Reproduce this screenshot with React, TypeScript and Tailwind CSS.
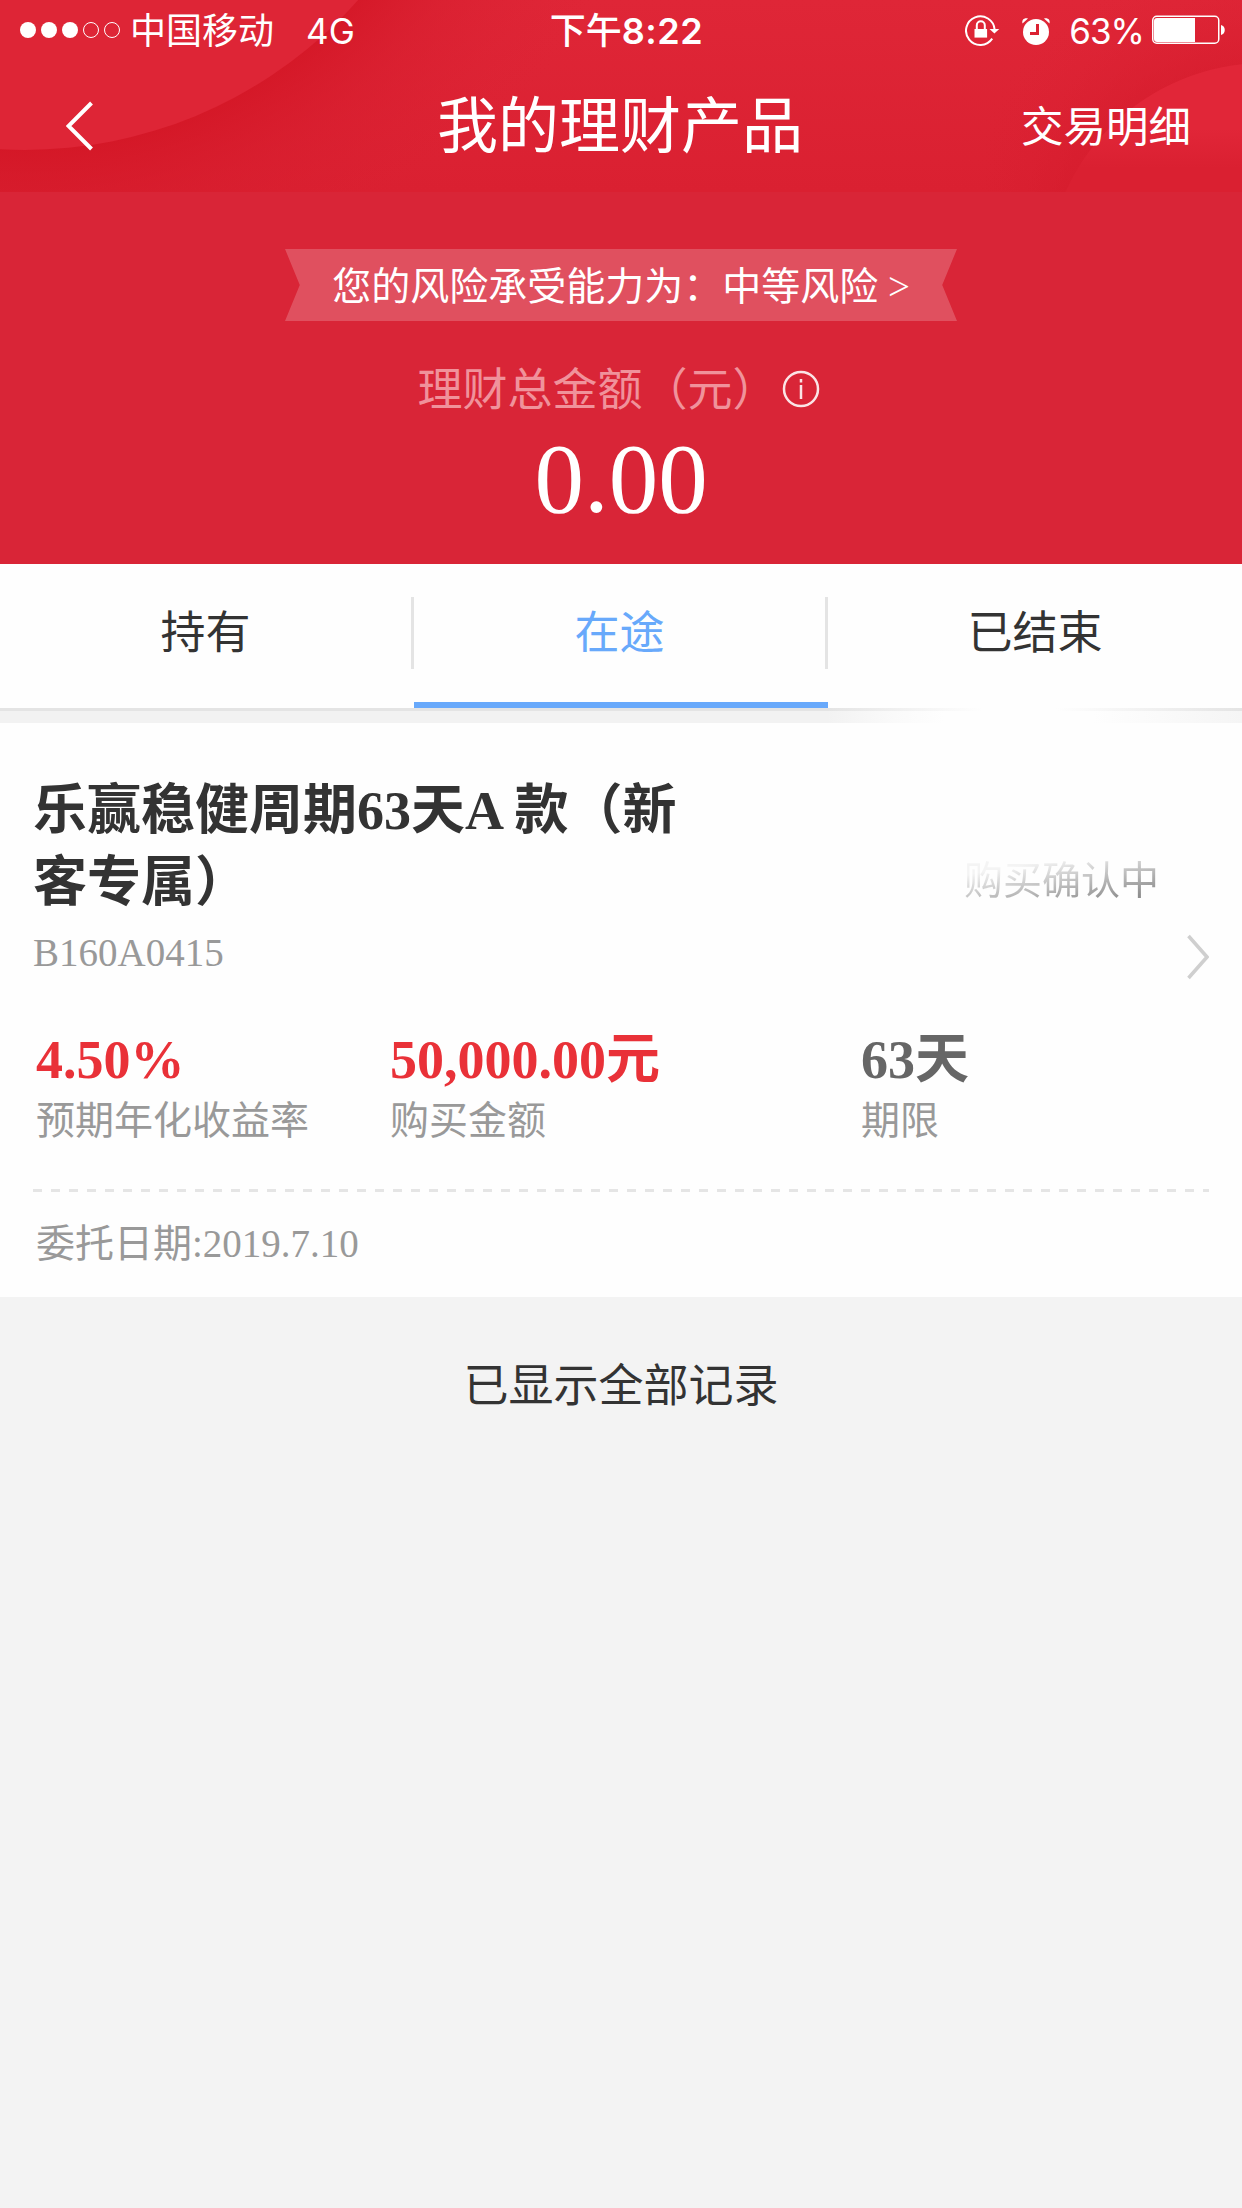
import React, { useState } from 'react';

const SANS = "font-['Inter','Noto_Sans_CJK_SC',sans-serif]";

interface Holding {
  name: string;
  code: string;
  status: string;
  rate: string;
  amount: string;
  term: string;
  date: string;
}

const tabs = ['持有', '在途', '已结束'];

const holdings: Holding[] = [
  {
    name: '乐赢稳健周期63天A 款（新客专属）',
    code: 'B160A0415',
    status: '购买确认中',
    rate: '4.50%',
    amount: '50,000.00元',
    term: '63天',
    date: '2019.7.10',
  },
];

const HeaderArt: React.FC = () => (
  <svg className="absolute inset-0 w-full h-full" viewBox="0 0 1242 192" preserveAspectRatio="none">
    <defs>
      <radialGradient id="shadeLeft" gradientUnits="userSpaceOnUse" cx="25" cy="-295" r="640">
        <stop offset="0.69" stopColor="#d21423" stopOpacity="0.75" />
        <stop offset="0.8" stopColor="#d51a2a" stopOpacity="0.42" />
        <stop offset="1" stopColor="#dc2233" stopOpacity="0" />
      </radialGradient>
      <radialGradient id="shadeRight" gradientUnits="userSpaceOnUse" cx="1265" cy="282" r="330">
        <stop offset="0.66" stopColor="#d41a2b" stopOpacity="0.5" />
        <stop offset="1" stopColor="#dc2233" stopOpacity="0" />
      </radialGradient>
      <linearGradient id="discRight" x1="0" y1="0" x2="0" y2="1">
        <stop offset="0" stopColor="#e12638" />
        <stop offset="0.15" stopColor="#e12638" />
        <stop offset="0.24" stopColor="#da2031" />
      </linearGradient>
      <linearGradient id="base" x1="0" y1="0" x2="0" y2="1">
        <stop offset="0" stopColor="#df2637" />
        <stop offset="1" stopColor="#da2031" />
      </linearGradient>
    </defs>
    <rect width="1242" height="192" fill="url(#base)" />
    <rect width="1242" height="192" fill="url(#shadeLeft)" />
    <rect width="1242" height="192" fill="url(#shadeRight)" />
    <circle cx="25" cy="-295" r="445" fill="#de2536" />
    <circle cx="1265" cy="282" r="219" fill="url(#discRight)" />
  </svg>
);

const StatusBar: React.FC = () => (
  <div className={`relative h-[60px] pl-5 pr-4 grid grid-cols-[1fr_auto_1fr] items-center text-white text-[36px] leading-[57px] ${SANS}`}>
    <div className="flex items-center">
      <div className="flex gap-[5px]">
        {[1, 1, 1, 0, 0].map((on, i) => (
          <span
            key={i}
            className={`w-4 h-4 rounded-full ${on ? 'bg-white' : 'border border-white'}`}
          />
        ))}
      </div>
      <span className="ml-[10px] pt-[3px]">中国移动</span>
      <span className="ml-[32px] pt-[3px] text-[35px]">4G</span>
    </div>
    <div className="pt-[3px] pl-[7px] font-medium">
      下午<span className="font-semibold tracking-[0.5px]">8:22</span>
    </div>
    <div className="flex items-center justify-end">
      <svg className="w-[36px] h-[32px]" viewBox="0 0 36 32" fill="none">
        <path d="M27.2 24.6A14.3 14.3 0 1 1 29.6 15.5" stroke="#fff" strokeWidth="2" />
        <path d="M24.5 15h9.8l-4.9 4.6z" fill="#fff" />
        <path d="M9.5 15h12.6v8.6H9.5z" fill="#fff" />
        <path d="M11.8 15v-3.7a4 4 0 0 1 8 0V15" stroke="#fff" strokeWidth="2" />
      </svg>
      <svg className="ml-[20px] w-[30px] h-[32px]" viewBox="0 0 30 32" fill="none">
        <circle cx="15" cy="18" r="13" fill="#fff" />
        <path d="M16.5 10v9.5H9" stroke="#db2132" strokeWidth="3" />
        <path d="M1.5 9.5C0.5 6 3 3.5 7 4.5zM28.5 9.5C29.5 6 27 3.5 23 4.5z" fill="#fff" />
      </svg>
      <span className="ml-[18px] pt-[3px] text-[35px] tracking-[-1px]">63%</span>
      <svg className="ml-[8px] w-[74px] h-[30px]" viewBox="0 0 74 30" fill="none">
        <rect x="0.75" y="1.25" width="66" height="27" rx="4" stroke="#fff" strokeWidth="1.5" />
        <path d="M5 3h38v24H5a3 3 0 0 1-3-3V6a3 3 0 0 1 3-3z" fill="#fff" />
        <path d="M69 10c5 1 5 9 0 10z" fill="#fff" />
      </svg>
    </div>
  </div>
);

const NavBar: React.FC = () => (
  <div className={`relative h-[132px] px-[51px] grid grid-cols-[1fr_auto_1fr] items-center text-white ${SANS}`}>
    <button className="ml-[15px] w-7 h-[50px]">
      <svg viewBox="0 0 28 50" className="w-7 h-[50px]" fill="none">
        <path d="M25.5 2L2.5 25L25.5 48" stroke="#fff" strokeWidth="4" />
      </svg>
    </button>
    <h1 className="pr-[2px] text-[61px] leading-[132px]">我的理财产品</h1>
    <button className="justify-self-end pt-[2px] text-[42.5px] leading-[130px]">交易明细</button>
  </div>
);

const Summary: React.FC = () => (
  <section className="h-[372px] pt-[57px] flex flex-col items-center text-white">
    <button className="w-[672px] h-[72px] pt-[3px] bg-white/20 text-[39px] leading-[69px] [clip-path:polygon(0_0,100%_0,97.8%_50%,100%_100%,0_100%,2.2%_50%)]">
      您的风险承受能力为：中等风险 &gt;
    </button>
    <div className="mt-[35px] h-[66px] flex items-center gap-1 pr-[5px]">
      <span className="pt-[4px] text-[45px] leading-[66px] text-[#f0929b]">理财总金额（元）</span>
      <svg className="w-[38px] h-[38px]" viewBox="0 0 38 38" fill="none" stroke="#fbe4e6" strokeWidth="2.5">
        <circle cx="19" cy="19" r="17" />
        <path d="M19 15v14M19 9v3.5" />
      </svg>
    </div>
    <p className="mt-[2px] text-[99px] leading-[110px]">0.00</p>
  </section>
);

const Field: React.FC<{ value: string; label: string; color: string }> = ({ value, label, color }) => (
  <div>
    <p className={`text-[54px] leading-[66px] font-bold ${color}`}>{value}</p>
    <p className="text-[39px] leading-[56px] text-[#999999]">{label}</p>
  </div>
);

const HoldingCard: React.FC<{ item: Holding }> = ({ item }) => (
  <article className="h-[574px] bg-[#fefefe] px-[33px] pt-[52px]">
    <div className="flex justify-between h-[200px]">
      <div className="w-[660px]">
        <h2 className="text-[54px] leading-[72px] font-bold text-[#333333]">{item.name}</h2>
        <p className="mt-2 text-[39px] leading-[52px] text-[#999999]">{item.code}</p>
      </div>
      <div className="flex pt-[77px]">
        <span className="h-[58px] text-[39px] leading-[58px] text-transparent bg-clip-text bg-[linear-gradient(170deg,#f4f4f4_25%,#c4c4c4_50%,#8f8f8f_80%)]">
          {item.status}
        </span>
        <svg className="mt-[82px] ml-[28px] w-[22px] h-[46px]" viewBox="0 0 22 46" fill="none">
          <path d="M1.5 2L20 23L1.5 44" stroke="#cfcfcf" strokeWidth="3.5" />
        </svg>
      </div>
    </div>
    <div className="mt-[52px] pl-[3px] grid grid-cols-[354px_471px_1fr]">
      <Field value={item.rate} label="预期年化收益率" color="text-[#e93138]" />
      <Field value={item.amount} label="购买金额" color="text-[#e93138]" />
      <Field value={item.term} label="期限" color="text-[#666666]" />
    </div>
    <div className="mt-[40px] h-[3px] bg-[repeating-linear-gradient(90deg,#e5e5e5_0_9px,transparent_9px_18px)]" />
    <p className="mt-[24px] pl-[3px] text-[39px] leading-[56px] text-[#999999]">委托日期:{item.date}</p>
  </article>
);

export default function App() {
  const [active, setActive] = useState(1);

  return (
    <div className="w-[1242px] h-[2208px] overflow-hidden bg-[#f3f3f3] font-['Liberation_Serif','Noto_Sans_CJK_SC',serif]">
      <header className="bg-[#d92537]">
        <div className="relative h-[192px]">
          <HeaderArt />
          <StatusBar />
          <NavBar />
        </div>
        <Summary />
      </header>

      <nav className="h-[147px] grid grid-cols-3 bg-[#fefefe] border-b-[3px] border-[#e4e4e4] [border-image:linear-gradient(90deg,#e4e4e4_66.6%,#f4f4f4_74%,#fefefe_79%,#fefefe_85%,#e4e4e4)_1]">
        {tabs.map((tab, i) => (
          <button
            key={tab}
            onClick={() => setActive(i)}
            className={`flex flex-col text-[45px] ${i === active ? 'text-[#68a9fb]' : 'text-[#333333]'}`}
          >
            <span className={`w-full mt-[33px] h-[72px] pt-[1px] leading-[72px] ${i < 2 ? 'border-r-[3px] border-[#e4e4e4]' : ''}`}>
              {tab}
            </span>
            {i === active && <span className="mt-[33px] w-full h-[6px] bg-[#68a9fb]" />}
          </button>
        ))}
      </nav>
      <div className="h-3 bg-[linear-gradient(90deg,#f2f2f2_66.6%,#fafafa_72%,#fefefe_76%,#fefefe_88%,#f5f5f5_100%)]" />

      {holdings.map((item) => (
        <HoldingCard key={item.code} item={item} />
      ))}

      <p className="mt-[56px] text-center text-[45px] leading-[68px] text-[#333333]">已显示全部记录</p>
    </div>
  );
}
